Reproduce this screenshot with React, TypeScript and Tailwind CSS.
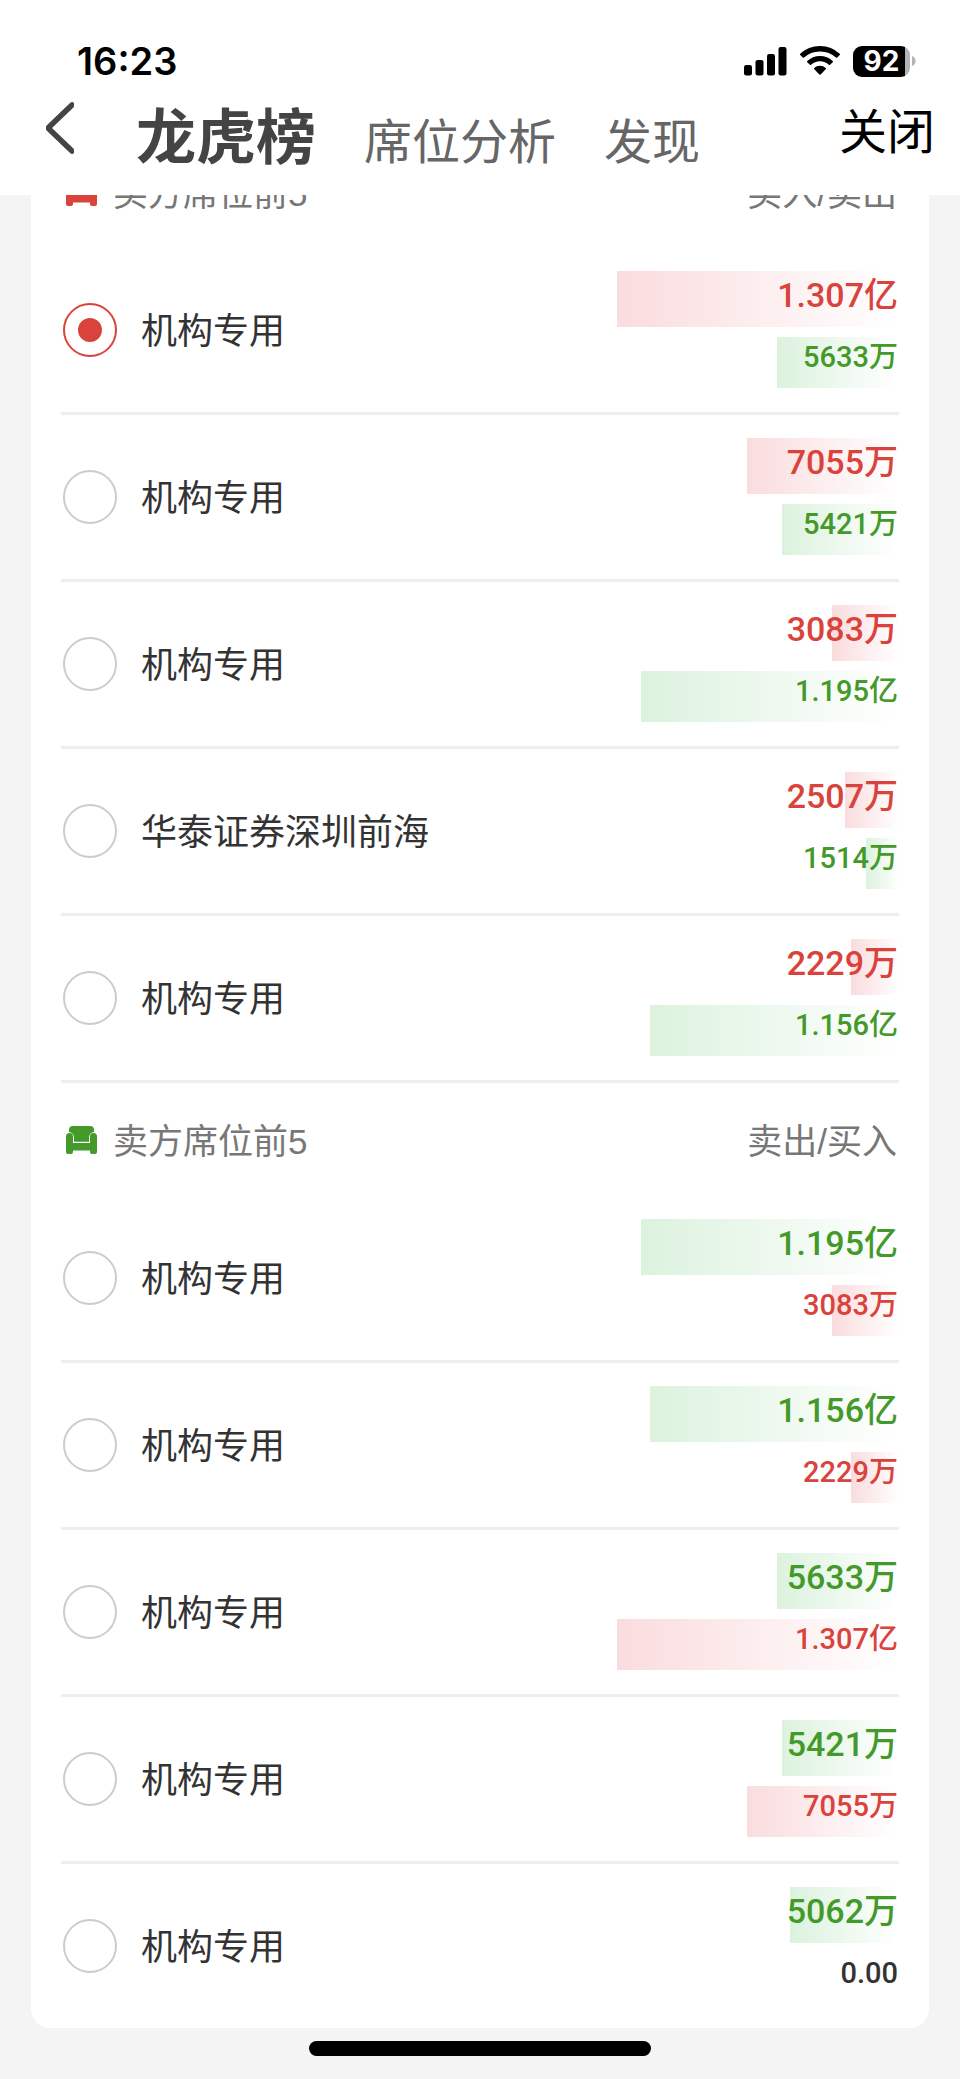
import { useState } from "react";

type Tone = "red" | "green" | "none";

interface Amount {
  label: string;
  value: number;
  tone: Tone;
}

interface Seat {
  id: string;
  name: string;
  main: Amount;
  sub: Amount;
}

// values are in 万
const MAX_AMOUNT = 13070;

const red = (label: string, value: number): Amount => ({ label, value, tone: "red" });
const green = (label: string, value: number): Amount => ({ label, value, tone: "green" });

const buyers: Seat[] = [
  { id: "b1", name: "机构专用", main: red("1.307亿", 13070), sub: green("5633万", 5633) },
  { id: "b2", name: "机构专用", main: red("7055万", 7055), sub: green("5421万", 5421) },
  { id: "b3", name: "机构专用", main: red("3083万", 3083), sub: green("1.195亿", 11950) },
  { id: "b4", name: "华泰证券深圳前海", main: red("2507万", 2507), sub: green("1514万", 1514) },
  { id: "b5", name: "机构专用", main: red("2229万", 2229), sub: green("1.156亿", 11560) },
];

const sellers: Seat[] = [
  { id: "s1", name: "机构专用", main: green("1.195亿", 11950), sub: red("3083万", 3083) },
  { id: "s2", name: "机构专用", main: green("1.156亿", 11560), sub: red("2229万", 2229) },
  { id: "s3", name: "机构专用", main: green("5633万", 5633), sub: red("1.307亿", 13070) },
  { id: "s4", name: "机构专用", main: green("5421万", 5421), sub: red("7055万", 7055) },
  {
    id: "s5",
    name: "机构专用",
    main: green("5062万", 5062),
    sub: { label: "0.00", value: 0, tone: "none" },
  },
];

const toneClass: Record<Tone, string> = {
  red: "text-[#d9433b] from-[#fadcde] to-white",
  green: "text-[#43992a] from-[#dcf2de] to-white",
  none: "text-[#333333] from-white to-white",
};

function StatusBar() {
  return (
    <div className="flex h-[92px] items-center justify-between pt-[30px] pr-11 pl-[77px]">
      <span className="font-['Inter',sans-serif] text-[38px] leading-none font-semibold text-black">
        16:23
      </span>
      <div className="flex items-center gap-[13px]">
        <svg width="43" height="30" viewBox="0 0 43 30" fill="#000">
          <rect x="0" y="19" width="8" height="10.5" rx="2.2" />
          <rect x="11.5" y="14" width="8" height="15.5" rx="2.2" />
          <rect x="23" y="8" width="8" height="21.5" rx="2.2" />
          <rect x="34.5" y="1" width="8" height="28.5" rx="2.2" />
        </svg>
        <svg width="40" height="30" viewBox="0 0 40 30" fill="#000">
          <path d="M20 0C12.3 0 5.3 3 0.3 7.8a0.9 0.9 0 0 0 0 1.3l2.5 2.5a0.9 0.9 0 0 0 1.2 0A23 23 0 0 1 20 5.4a23 23 0 0 1 16 6.2a0.9 0.9 0 0 0 1.2 0l2.5-2.5a0.9 0.9 0 0 0 0-1.3A28.4 28.4 0 0 0 20 0z" />
          <path d="M20 9.9c-4.9 0-9.4 1.9-12.7 5a0.9 0.9 0 0 0 0 1.3l2.6 2.6a0.9 0.9 0 0 0 1.2 0A13 13 0 0 1 20 15.3a13 13 0 0 1 8.9 3.5a0.9 0.9 0 0 0 1.2 0l2.6-2.6a0.9 0.9 0 0 0 0-1.3A18.5 18.5 0 0 0 20 9.9z" />
          <path d="M20 19.8c-2.2 0-4.2 0.8-5.7 2.1a0.9 0.9 0 0 0 0 1.3l5.1 5.2a0.9 0.9 0 0 0 1.2 0l5.1-5.2a0.9 0.9 0 0 0 0-1.3A8.6 8.6 0 0 0 20 19.8z" />
        </svg>
        <div className="flex items-center gap-[2px]">
          <div className="flex h-[31px] w-[57px] items-center justify-center overflow-hidden rounded-[9px] bg-linear-to-r from-black from-92% to-[#b4b4b4] to-92% font-['Inter',sans-serif] text-[28px] leading-none font-bold text-white">
            92
          </div>
          <svg width="4" height="10" viewBox="0 0 4 10" fill="#b4b4b4">
            <path d="M0 0C2.4 0.8 3.6 2.8 3.6 5S2.4 9.2 0 10z" />
          </svg>
        </div>
      </div>
    </div>
  );
}

function NavBar() {
  return (
    <div className="flex h-[103px] items-center pr-[25px] pb-8 pl-11">
      <button type="button" aria-label="返回">
        <svg
          width="30"
          height="52"
          viewBox="0 0 30 52"
          fill="none"
          stroke="#444444"
          strokeWidth="5.6"
          strokeLinecap="round"
          strokeLinejoin="bevel"
        >
          <path d="M28 3L4 26L28 49" />
        </svg>
      </button>
      <nav className="ml-[62px] flex items-baseline gap-12 pt-4 text-[48px] leading-[60px] whitespace-nowrap text-[#666666]">
        <a href="#board" className="text-[60px] font-bold text-[#444444]">
          龙虎榜
        </a>
        <a href="#seats">席位分析</a>
        <a href="#discover">发现</a>
      </nav>
      <button type="button" className="ml-auto text-[48px] leading-[60px] whitespace-nowrap text-black">
        关闭
      </button>
    </div>
  );
}

function SofaIcon() {
  return (
    <svg width="31" height="28" viewBox="0 0 31 28" fill="currentColor">
      <path d="M7 0H24a4 4 0 0 1 4 4V6a5.5 5.5 0 0 0-5 5.5V15.8H8V11.500A5.5 5.5 0 0 0 3 6V4a4 4 0 0 1 4-4z" />
      <path d="M0 10.5a3.500 3.500 0 0 1 7 0V17H24V10.500a3.500 3.500 0 0 1 7 0V26a2 2 0 0 1-2 2H26a2 2 0 0 1-2-2V24.500H7V26a2 2 0 0 1-2 2H2a2 2 0 0 1-2-2z" />
    </svg>
  );
}

function AmountBar({ amount, large }: { amount: Amount; large?: boolean }) {
  const size = large
    ? "h-14 text-[34px] leading-[48px] font-medium"
    : "h-[51px] text-[29px] leading-[40px] font-medium";
  // the label may be wider than the bar, so it overflows to the left
  return (
    <div
      className={`flex items-start justify-end bg-linear-to-r pr-px font-['Roboto','Noto_Sans_CJK_SC',sans-serif] whitespace-nowrap ${size} ${toneClass[amount.tone]}`}
      style={{ width: `${(amount.value / MAX_AMOUNT) * 100}%` }}
    >
      <span>{amount.label}</span>
    </div>
  );
}

interface SeatSectionProps {
  title: string;
  columns: string;
  iconClass: string;
  seats: Seat[];
  selected: string;
  onSelect: (id: string) => void;
}

function SeatSection({ title, columns, iconClass, seats, selected, onSelect }: SeatSectionProps) {
  return (
    <section className="group">
      <div className="flex h-[113px] items-center justify-between px-[2px] font-['Liberation_Sans','Noto_Sans_CJK_SC',sans-serif] text-[35px] leading-[54px] text-[#777777]">
        <h2 className="flex items-center gap-4 pl-[3px]">
          <span className={iconClass}>
            <SofaIcon />
          </span>
          <span className="pt-1">{title}</span>
        </h2>
        <span className="pt-1">{columns}</span>
      </div>
      <ul>
        {seats.map((seat) => (
          <li
            key={seat.id}
            className="border-b-[3px] border-[#eeeeee] group-last:last:border-b-0"
          >
            <label className="flex items-center pt-[23px] pb-6 pl-[2px]">
              <input
                type="radio"
                name="seat"
                checked={selected === seat.id}
                onChange={() => onSelect(seat.id)}
                className="grid size-[54px] shrink-0 appearance-none place-content-center rounded-full border-2 border-[#cccccc] before:size-6 before:rounded-full before:content-[''] checked:border-[#d9433b] checked:before:bg-[#d9433b]"
              />
              <span className="ml-6 pb-[3px] text-[36px] leading-[54px] text-[#333333]">
                {seat.name}
              </span>
              <span className="ml-auto flex w-[282px] shrink-0 flex-col items-end gap-[10px]">
                <AmountBar amount={seat.main} large />
                <AmountBar amount={seat.sub} />
              </span>
            </label>
          </li>
        ))}
      </ul>
    </section>
  );
}

export default function App() {
  const [selected, setSelected] = useState("b1");

  return (
    <div className="flex min-h-screen flex-col bg-[#f4f4f4] font-['Noto_Sans_CJK_SC',sans-serif]">
      <header className="bg-white">
        <StatusBar />
        <NavBar />
      </header>

      {/* the list is scrolled, its first heading is partly under the header */}
      <main className="overflow-hidden px-[31px]">
        <div className="-mt-[60px] rounded-[20px] bg-white px-[30px]">
          <SeatSection
            title="买方席位前5"
            columns="买入/卖出"
            iconClass="text-[#d9433b]"
            seats={buyers}
            selected={selected}
            onSelect={setSelected}
          />
          <SeatSection
            title="卖方席位前5"
            columns="卖出/买入"
            iconClass="text-[#43992a]"
            seats={sellers}
            selected={selected}
            onSelect={setSelected}
          />
        </div>
      </main>

      <footer className="flex justify-center pt-[13px] pb-6">
        <div className="h-[15px] w-[342px] rounded-full bg-black" />
      </footer>
    </div>
  );
}
